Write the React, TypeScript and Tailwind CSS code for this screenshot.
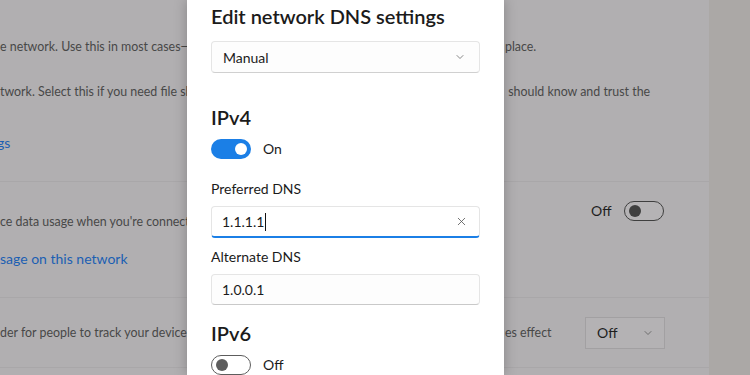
import React from 'react';
import { ChevronDown, X } from 'lucide-react';

const font = { fontFamily: 'Lato, "Noto Sans", sans-serif' };

function Toggle({ on }: { on: boolean }) {
  if (on) {
    return (
      <div className="w-[40px] h-[20px] rounded-full bg-[#1b7fe6] flex items-center justify-end pr-[4px]">
        <div className="w-[12px] h-[12px] rounded-full bg-white" />
      </div>
    );
  }
  return (
    <div className="w-[40px] h-[20px] rounded-full border border-[#5d5d5d] bg-white flex items-center pl-[4px]">
      <div className="w-[12px] h-[12px] rounded-full bg-[#5d5d5d]" />
    </div>
  );
}

function DimToggle() {
  return (
    <div className="w-[40px] h-[20px] rounded-full border border-[#3f3f3f] bg-[#b5b3b5] flex items-center pl-[4px]">
      <div className="w-[12px] h-[12px] rounded-full bg-[#3f3f3f]" />
    </div>
  );
}

function Clip({ children, className = '' }: { children: React.ReactNode; className?: string }) {
  return <div className={'w-[187px] shrink-0 overflow-hidden whitespace-nowrap ' + className}>{children}</div>;
}

export default function App() {
  return (
    <div className="relative w-[750px] h-[375px] overflow-hidden flex bg-[#aba8a6]" style={font}>
      {/* dimmed settings page behind the dialog */}
      <div className="w-[709px] h-full bg-[#b1afb1] flex flex-col text-[12.4px] leading-[18px] text-[#484848]">
        <div className="h-[181px] shrink-0 pt-[38px] flex flex-col">
          <div className="flex">
            <Clip>e network. Use this in most cases—</Clip>
            <div className="w-[318px] shrink-0" />
            <span>place.</span>
          </div>
          <div className="flex mt-[27px]">
            <Clip>twork. Select this if you need file sh</Clip>
            <div className="w-[318px] shrink-0" />
            <span className="whitespace-nowrap">&nbsp;should know and trust the</span>
          </div>
          <div className="flex mt-[32px] text-[14px] leading-[20px] text-[#1c5fb3]">
            <Clip className="-ml-[3px]">gs</Clip>
          </div>
        </div>

        <div className="h-[116px] shrink-0 border-t border-[#a9a7a9] flex">
          <div className="w-[505px] shrink-0 pt-[31px] flex flex-col">
            <Clip>ce data usage when you're connect</Clip>
            <div className="mt-[18px] text-[14px] leading-[20px] text-[#1c5fb3]">
              <Clip>sage on this network</Clip>
            </div>
          </div>
          <div className="pt-[19px] pl-[86px] flex items-start gap-[13px]">
            <span className="text-[14px] leading-[20px] text-[#1e1e1e]">Off</span>
            <DimToggle />
          </div>
        </div>

        <div className="h-[70px] shrink-0 border-t border-[#a9a7a9] flex items-center">
          <Clip>der for people to track your device</Clip>
          <div className="w-[318px] shrink-0" />
          <div className="w-[160px] flex items-center justify-between">
            <span className="whitespace-nowrap">es effect</span>
            <div className="w-[80px] h-[32px] border border-[#a2a0a2] bg-[#b4b2b4] flex items-center justify-between pl-[11px] pr-[10px] text-[14px] text-[#1e1e1e]">
              <span>Off</span>
              <ChevronDown className="w-[12px] h-[12px] text-[#555]" strokeWidth={1.5} />
            </div>
          </div>
        </div>

        <div className="flex-1 border-t border-[#a9a7a9]" />
      </div>

      {/* dialog */}
      <div className="absolute left-[187px] top-0 w-[317px] h-full bg-white shadow-[0_0_12px_rgba(0,0,0,0.25)] px-[24px] pt-[2px] flex flex-col text-[#1b1b1b]">
        <h2 className="text-[20px] leading-[28px] font-semibold">Edit network DNS settings</h2>

        <div className="mt-[11px] h-[32px] rounded-[4px] border border-[#e5e5e5] border-b-[#d0d0d0] bg-[#fdfdfd] flex items-center justify-between pl-[11px] pr-[13px] text-[14px]">
          <span>Manual</span>
          <ChevronDown className="w-[12px] h-[12px] text-[#606060]" strokeWidth={1.5} />
        </div>

        <h3 className="mt-[30px] text-[20px] leading-[28px] font-semibold">IPv4</h3>
        <div className="mt-[7px] flex items-center gap-[12px] text-[14px]">
          <Toggle on />
          <span>On</span>
        </div>

        <div className="mt-[20px] text-[14px] leading-[20px]">Preferred DNS</div>
        <div className="mt-[7px] h-[32px] rounded-[4px] border border-[#e5e5e5] border-b-2 border-b-[#1b7fe6] bg-white flex items-center justify-between pl-[10px] pr-[11px] text-[14px]">
          <span className="flex items-center">
            1.1.1.1
            <span className="inline-block w-[1px] h-[18px] bg-[#111] ml-[1px]" />
          </span>
          <X className="w-[13px] h-[13px] text-[#555]" strokeWidth={1.5} />
        </div>

        <div className="mt-[9px] text-[14px] leading-[20px]">Alternate DNS</div>
        <div className="mt-[7px] h-[31px] rounded-[4px] border border-[#e5e5e5] border-b-[#c9c9c9] bg-[#fdfdfd] flex items-center pl-[10px] text-[14px]">
          1.0.0.1
        </div>

        <h3 className="mt-[14px] text-[20px] leading-[28px] font-semibold">IPv6</h3>
        <div className="mt-[7px] flex items-center gap-[12px] text-[14px]">
          <Toggle on={false} />
          <span>Off</span>
        </div>
      </div>
    </div>
  );
}
